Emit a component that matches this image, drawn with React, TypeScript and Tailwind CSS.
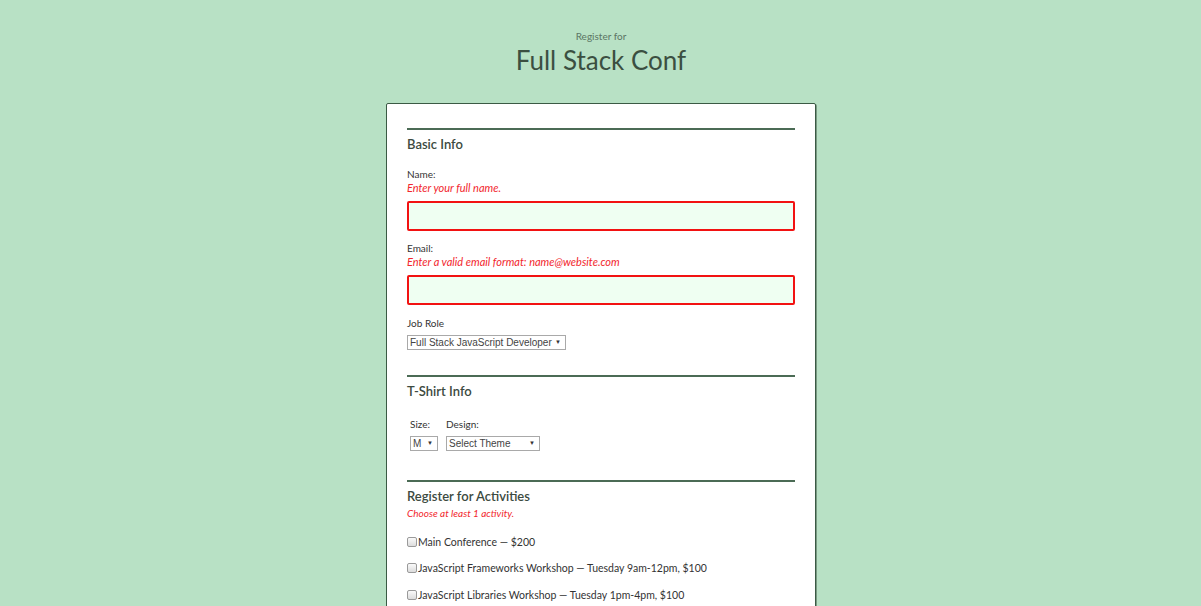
import React from "react";

const font = { fontFamily: "Lato, 'Noto Sans', sans-serif" };

function Select({ text, w }: { text: string; w: string }) {
  return (
    <div
      className={`flex h-[15px] items-center justify-between gap-[3px] whitespace-nowrap border border-[#a9a9a9] bg-white pl-[2px] pr-[4px] text-[10px] leading-[13px] text-[#444] ${w}`}
      style={{ fontFamily: "'Liberation Sans', Arial, sans-serif" }}
    >
      <span>{text}</span>
      <span className="text-[6px] text-[#333]">▼</span>
    </div>
  );
}

function Rule({ mt }: { mt: string }) {
  return <div className={`h-[2px] bg-[#4b6b55] ${mt}`} />;
}

function Check({ label, mt }: { label: string; mt: string }) {
  return (
    <div className={`flex h-[14px] items-center ${mt}`}>
      <span className="mr-[1px] h-[10px] w-[10px] rounded-[2px] border border-[#9a9a9a] bg-gradient-to-b from-[#fafafa] to-[#dcdcdc]" />
      <span className="text-[10.5px] leading-[14px] text-[#333]">{label}</span>
    </div>
  );
}

export default function App() {
  return (
    <div className="h-[606px] overflow-hidden bg-[#b8e1c5] pl-[1px]" style={font}>
      <div className="pt-[29px] text-center">
        <div className="text-[10px] leading-[14px] text-[#5b7564]">Register for</div>
        <div className="mt-[1px] text-[26px] leading-[32px] text-[#3b4f41]">Full Stack Conf</div>
      </div>
      <div className="mx-auto mt-[27px] w-[430px] rounded-[2px] border border-[#3a5a44] bg-white px-[20px] pt-[24px] pb-[40px] shadow-[1px_1px_0_#7a9a83]">
        <Rule mt="mt-0" />
        <div className="mt-[6px] text-[13px] font-semibold leading-[16px] text-[#3c4a41]">Basic Info</div>
        <div className="mt-[15px] text-[10px] leading-[14px] text-[#333]">Name:</div>
        <div className="text-[11px] italic leading-[14px] text-[#f2262d]">Enter your full name.</div>
        <div className="mt-[6px] h-[30px] rounded-[2px] border-2 border-[#f21212] bg-[#effff2]" />
        <div className="mt-[10px] text-[10px] leading-[14px] text-[#333]">Email:</div>
        <div className="text-[11px] italic leading-[14px] text-[#f2262d]">
          Enter a valid email format: name@website.com
        </div>
        <div className="mt-[6px] h-[30px] rounded-[2px] border-2 border-[#f21212] bg-[#effff2]" />
        <div className="mt-[11px] text-[10px] leading-[14px] text-[#333]">Job Role</div>
        <div className="mt-[5px] flex">
          <Select text="Full Stack JavaScript Developer" w="w-[159px]" />
        </div>
        <Rule mt="mt-[25px]" />
        <div className="mt-[6px] text-[13px] font-semibold leading-[16px] text-[#3c4a41]">T-Shirt Info</div>
        <div className="mt-[18px] flex pl-[3px]">
          <div className="flex flex-col">
            <div className="text-[10px] leading-[14px] text-[#333]">Size:</div>
            <div className="mt-[5px]">
              <Select text="M" w="w-[28px]" />
            </div>
          </div>
          <div className="ml-[8px] flex flex-col">
            <div className="text-[10px] leading-[14px] text-[#333]">Design:</div>
            <div className="mt-[5px]">
              <Select text="Select Theme" w="w-[94px]" />
            </div>
          </div>
        </div>
        <Rule mt="mt-[29px]" />
        <div className="mt-[6px] text-[13px] font-semibold leading-[16px] text-[#3c4a41]">Register for Activities</div>
        <div className="mt-[2px] text-[10px] italic leading-[14px] text-[#f2262d]">Choose at least 1 activity.</div>
        <Check label="Main Conference — $200" mt="mt-[15px]" />
        <Check label="JavaScript Frameworks Workshop — Tuesday 9am-12pm, $100" mt="mt-[12px]" />
        <Check label="JavaScript Libraries Workshop — Tuesday 1pm-4pm, $100" mt="mt-[13px]" />
      </div>
    </div>
  );
}
